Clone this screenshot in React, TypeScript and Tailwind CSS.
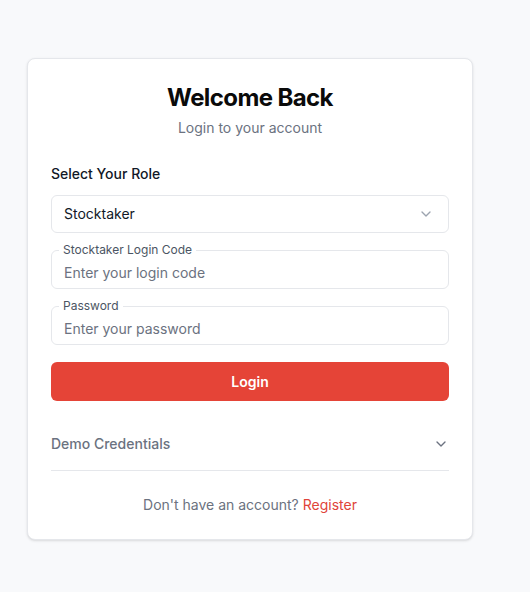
import React from "react";

const Chevron = ({ className }: { className?: string }) => (
  <svg className={className} width="16" height="16" viewBox="0 0 24 24" fill="none" stroke="currentColor" strokeWidth="2" strokeLinecap="round" strokeLinejoin="round">
    <path d="m6 9 6 6 6-6" />
  </svg>
);

export default function App() {
  return (
    <div className="min-h-[592px] w-[530px] bg-[#f8f9fb] pt-[58px] pl-[27px]" style={{ fontFamily: "Inter, 'Noto Sans', sans-serif" }}>
      <div className="w-[446px] rounded-lg border border-[#e5e7eb] bg-white px-[23px] pt-[23px] pb-6 shadow-sm">
        <h1 className="text-center text-2xl leading-8 font-bold tracking-tight text-[#0a0a0a]">Welcome Back</h1>
        <p className="mt-1 text-center text-sm leading-5 text-[#6b7280]">Login to your account</p>

        <div className="mt-[26px] text-sm leading-5 font-medium text-[#111827]">Select Your Role</div>
        <button className="mt-[11px] flex h-[38px] w-full items-center justify-between rounded-md border border-[#e5e7eb] bg-white pl-3 pr-[14px] text-sm text-[#111827]">
          <span>Stocktaker</span>
          <Chevron className="h-4 w-4 text-[#9ca3af]" />
        </button>

        <fieldset className="mt-[9px] rounded-md border border-[#e5e7eb] px-3 pb-0.5">
          <legend className="-ml-[5px] px-1 text-xs leading-4 text-[#4b5563]">Stocktaker Login Code</legend>
          <input className="h-7 w-full bg-transparent text-sm text-[#111827] outline-none placeholder:text-[#6b7280]" placeholder="Enter your login code" />
        </fieldset>

        <fieldset className="mt-[9px] rounded-md border border-[#e5e7eb] px-3 pb-0.5">
          <legend className="-ml-[5px] px-1 text-xs leading-4 text-[#4b5563]">Password</legend>
          <input type="password" className="h-7 w-full bg-transparent text-sm text-[#111827] outline-none placeholder:text-[#6b7280]" placeholder="Enter your password" />
        </fieldset>

        <button className="mt-[17px] flex h-[39px] w-full items-center justify-center rounded-md bg-[#e54437] text-sm font-semibold text-white">Login</button>

        <div className="mt-[17px] flex items-center justify-between border-b border-[#e5e7eb] py-4">
          <span className="text-sm leading-5 font-medium text-[#6b7280]">Demo Credentials</span>
          <Chevron className="h-4 w-4 text-[#6b7280]" />
        </div>

        <p className="mt-6 text-center text-sm leading-5 text-[#6b7280]">
          Don't have an account? <a className="text-[#e0443a]">Register</a>
        </p>
      </div>
    </div>
  );
}
